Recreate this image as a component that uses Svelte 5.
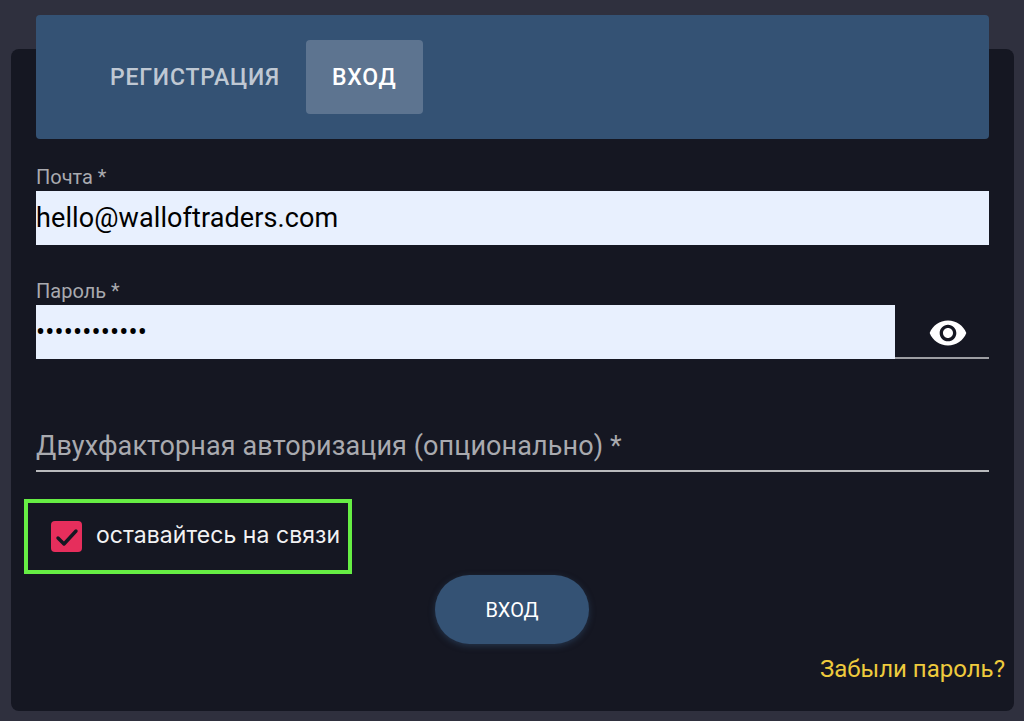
<script>
	let email = $state('hello@walloftraders.com');
	let password = $state('************');
	let code = $state('');
	let showPassword = $state(false);
	let remember = $state(true);
	let tab = $state('login');
</script>

<div class="page">
	<div class="card">
		<div class="tabs">
			<button class="tab" class:active={tab === 'register'} onclick={() => (tab = 'register')}>Регистрация</button>
			<button class="tab" class:active={tab === 'login'} onclick={() => (tab = 'login')}>Вход</button>
		</div>

		<form onsubmit={(e) => e.preventDefault()}>
			<label class="field email">
				<span class="label">Почта *</span>
				<input class="filled" type="text" bind:value={email} />
			</label>

			<label class="field pass">
				<span class="label">Пароль *</span>
				<span class="pass-row">
					<input class="filled" type={showPassword ? 'text' : 'password'} bind:value={password} />
					<button type="button" class="eye" aria-label="Показать пароль" onclick={() => (showPassword = !showPassword)}>
						<svg viewBox="0 0 24 24" width="40" height="40" fill="currentColor">
							<path d="M12 4.5C7 4.5 2.73 7.61 1 12c1.73 4.39 6 7.5 11 7.5s9.27-3.11 11-7.5c-1.73-4.39-6-7.5-11-7.5zM12 17c-2.76 0-5-2.24-5-5s2.24-5 5-5 5 2.24 5 5-2.24 5-5 5zm0-8c-1.66 0-3 1.34-3 3s1.34 3 3 3 3-1.34 3-3-1.34-3-3-3z" />
						</svg>
					</button>
				</span>
			</label>

			<label class="field code">
				<input type="text" placeholder="Двухфакторная авторизация (опционально) *" bind:value={code} />
			</label>

			<label class="remember">
				<input type="checkbox" bind:checked={remember} />
				<span class="box">
					{#if remember}
						<svg viewBox="0 0 24 24" width="24" height="24" fill="none" stroke="#151722" stroke-width="3.4" stroke-linecap="round" stroke-linejoin="round">
							<path d="M3 13l6 6L21 6" />
						</svg>
					{/if}
				</span>
				<span class="remember-text">оставайтесь на связи</span>
			</label>

			<div class="actions">
				<button class="submit" type="submit">Вход</button>
			</div>
		</form>

		<a class="forgot" href="#forgot">Забыли пароль?</a>
	</div>
</div>

<style>
	:global(body) {
		background: #2f303e;
		font-family: Roboto, 'Noto Sans', sans-serif;
	}

	.page {
		height: 721px;
		box-sizing: border-box;
		padding: 49px 10px 10px 11px;
		overflow: hidden;
	}

	.card {
		height: 662px;
		box-sizing: border-box;
		background: #151722;
		border-radius: 8px;
		padding: 0 25px;
		display: flex;
		flex-direction: column;
	}

	.tabs {
		margin-top: -34px;
		height: 124px;
		box-sizing: border-box;
		flex: none;
		background: #345274;
		border-radius: 4px;
		padding: 25px 0 25px 48px;
		display: flex;
	}

	.tab {
		border: none;
		background: none;
		height: 74px;
		padding: 0 26px;
		border-radius: 4px;
		font: 500 23px Roboto, sans-serif;
		letter-spacing: 0.8px;
		text-transform: uppercase;
		color: rgba(255, 255, 255, 0.7);
		cursor: pointer;
	}

	.tab.active {
		background: #5d7490;
		color: #fff;
	}

	.field {
		display: block;
	}

	.label {
		display: block;
		height: 25px;
		line-height: 22px;
		font-size: 20px;
		color: #a9aaaf;
	}

	.email {
		margin-top: 27px;
	}

	.pass {
		margin-top: 35px;
	}

	input.filled {
		display: block;
		width: 100%;
		height: 54px;
		box-sizing: border-box;
		margin: 0;
		padding: 0;
		border: none;
		background: #e8f0fe;
		color: #000;
		font: 400 27px Roboto, sans-serif;
		letter-spacing: 0.1px;
		outline: none;
	}

	.pass-row {
		display: flex;
		height: 54px;
		border-bottom: 2px solid #9d9ea3;
		box-sizing: border-box;
	}

	.pass-row input.filled {
		width: 859px;
		flex: none;
		letter-spacing: 0.15px;
	}

	.eye {
		flex: 1;
		height: 52px;
		border: none;
		background: none;
		padding: 4px 0 0 33px;
		color: #fff;
		display: flex;
		align-items: center;
		cursor: pointer;
	}

	.code {
		margin-top: 67px;
	}

	.code input {
		display: block;
		width: 100%;
		height: 46px;
		box-sizing: border-box;
		padding: 0 0 4px;
		border: none;
		border-bottom: 2px solid #b9babd;
		background: none;
		color: #fff;
		font: 400 27px Roboto, sans-serif;
		letter-spacing: 0.1px;
		outline: none;
	}

	.code input::placeholder {
		color: #a9aaaf;
		opacity: 1;
	}

	.remember {
		margin: 27px 0 0 -12px;
		width: 328px;
		height: 75px;
		box-sizing: border-box;
		border: 4px solid #66ee44;
		display: flex;
		align-items: center;
		padding-left: 23px;
		gap: 14px;
		cursor: pointer;
	}

	.remember input {
		display: none;
	}

	.box {
		width: 31px;
		height: 31px;
		flex: none;
		background: #e62e5c;
		border-radius: 4px;
		display: flex;
		align-items: center;
		justify-content: center;
	}

	.remember-text {
		font-family: Inter, Roboto, sans-serif;
		font-size: 23px;
		letter-spacing: 0.05px;
		line-height: 26px;
		color: #f2f2f3;
		white-space: nowrap;
		padding-bottom: 4px;
	}

	.actions {
		display: flex;
		justify-content: center;
		margin: 1px 1px 0 0;
	}

	.submit {
		width: 154px;
		height: 69px;
		border: none;
		border-radius: 35px;
		background: #345274;
		color: #fff;
		font: 400 20px Roboto, sans-serif;
		text-transform: uppercase;
		box-shadow: 0 2px 6px rgba(52, 82, 116, 0.5);
		cursor: pointer;
	}

	.forgot {
		align-self: flex-end;
		margin: 12px -16px 0 0;
		font-size: 24px;
		line-height: 26px;
		color: #eecb3d;
		text-decoration: none;
	}
</style>
